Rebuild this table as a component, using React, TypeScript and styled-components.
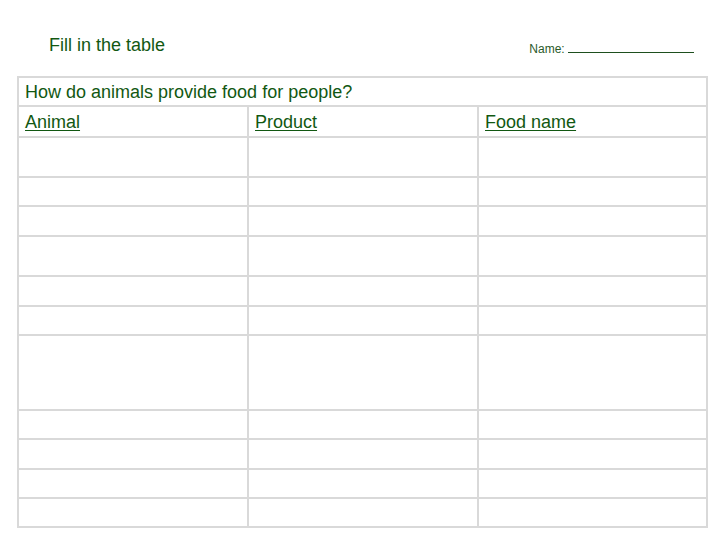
import React from "react";
import styled, { createGlobalStyle } from "styled-components";

const Global = createGlobalStyle`
  html, body { margin: 0; padding: 0; background: #ffffff; }
  body { font-family: "Liberation Sans", Arial, sans-serif; }
`;

const Page = styled.div`
  width: 720px;
  height: 540px;
  background: #fff;
  color: #125812;
  overflow: hidden;
`;

const Header = styled.div`
  height: 76px;
  box-sizing: border-box;
  display: flex;
  justify-content: space-between;
  align-items: flex-start;
  padding: 35px 26px 0 49px;
`;

const Title = styled.div`
  font-size: 18px;
  line-height: 20px;
`;

const NameField = styled.div`
  padding-top: 7px;
  font-size: 12px;
  line-height: 14px;
  color: #2a5a2a;
`;

const Blank = styled.span`
  display: inline-block;
  width: 126px;
  height: 0;
  border-bottom: 1px solid #1e4f1e;
`;

const Grid = styled.div`
  margin-left: 17px;
  width: 691px;
  box-sizing: border-box;
  display: grid;
  grid-template-columns: 228px 228px 1fr;
  gap: 2px;
  padding: 2px;
  background: #d9d9d9;
`;

const Cell = styled.div<{ $h: number; $span?: boolean }>`
  background: #fff;
  height: ${(p) => p.$h}px;
  box-sizing: border-box;
  grid-column: ${(p) => (p.$span ? "1 / -1" : "auto")};
  display: flex;
  align-items: center;
  padding: 2px 0 0 6px;
  font-size: 18px;
`;

const Heading = styled.span`
  text-decoration: underline;
  text-underline-offset: 2px;
`;

const rowHeights = [38, 27, 28, 38, 28, 27, 73, 27, 28, 27, 27];

export default function App() {
  return (
    <Page>
      <Global />
      <Header>
        <Title>Fill in the table</Title>
        <NameField>
          Name: <Blank />
        </NameField>
      </Header>
      <Grid>
        <Cell $h={27} $span>How do animals provide food for people?</Cell>
        <Cell $h={29}><Heading>Animal</Heading></Cell>
        <Cell $h={29}><Heading>Product</Heading></Cell>
        <Cell $h={29}><Heading>Food name</Heading></Cell>
        {rowHeights.map((h, i) => (
          <React.Fragment key={i}>
            <Cell $h={h} />
            <Cell $h={h} />
            <Cell $h={h} />
          </React.Fragment>
        ))}
      </Grid>
    </Page>
  );
}
